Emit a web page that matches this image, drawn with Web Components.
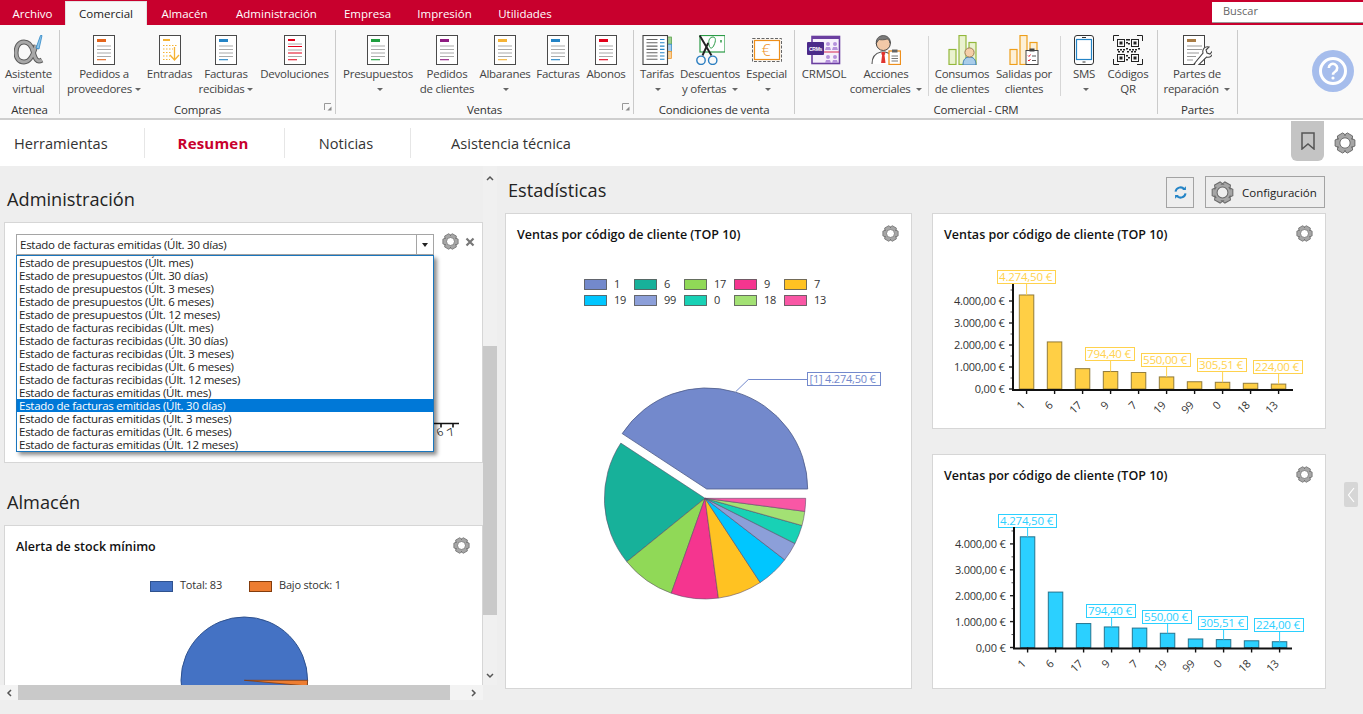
<!DOCTYPE html>
<html lang="es">
<head>
<meta charset="utf-8">
<title>Resumen</title>
<style>
  html, body { margin: 0; padding: 0; height: 100%; overflow: hidden; background: #eee; }
  body { font-family: "Open Sans", "Liberation Sans", sans-serif; font-size: 11.5px; color: #333; }
</style>
</head>
<body>

<erp-ribbon>
  <rb-group label="Atenea" style="width:60px">
    <rb-btn style="width:59px;margin-left:-1px">
      <svg slot="icon" width="30" height="30" viewBox="0 0 30 30"><path d="M28 25C23 28 21 24 19 16 17 9 14 7 10 7 4 7 2 13 2 18c0 5 3 9 8 9 6 0 10-9 12-17" fill="none" stroke="#5c5c5c" stroke-width="5"/><path d="M28 25C23 28 21 24 19 16 17 9 14 7 10 7 4 7 2 13 2 18c0 5 3 9 8 9 6 0 10-9 12-17" fill="none" stroke="#a8a8a8" stroke-width="3"/><path d="M22 13 26.500 .5 28 .5 25 14Z" fill="#8fc6ea" stroke="#2c86c7" stroke-width=".8"/></svg>
      Asistente<br>virtual
    </rb-btn>
  </rb-group>
  <rb-group label="Compras" launcher style="width:276px;padding-left:4px">
    <rb-btn style="width:80px" caret><doc-icon slot="icon" color="#e3651c"></doc-icon>Pedidos a<br>proveedores</rb-btn>
    <rb-btn style="width:51px"><doc-icon slot="icon" color="#f5b335" variant="in"></doc-icon>Entradas</rb-btn>
    <rb-btn style="width:62px" caret><doc-icon slot="icon" color="#2484c6"></doc-icon>Facturas<br>recibidas</rb-btn>
    <rb-btn style="width:75px"><doc-icon slot="icon" color="#e2001a" variant="ret"></doc-icon>Devoluciones</rb-btn>
  </rb-group>
  <rb-group label="Ventas" launcher style="width:298px;padding-left:5px">
    <rb-btn style="width:74px" caret><doc-icon slot="icon" color="#1f9e3f"></doc-icon>Presupuestos<br></rb-btn>
    <rb-btn style="width:64px"><doc-icon slot="icon" color="#8e1a80"></doc-icon>Pedidos<br>de clientes</rb-btn>
    <rb-btn style="width:52px" caret><doc-icon slot="icon" color="#f5b335"></doc-icon>Albaranes<br></rb-btn>
    <rb-btn style="width:54px"><doc-icon slot="icon" color="#2484c6"></doc-icon>Facturas</rb-btn>
    <rb-btn style="width:42px"><doc-icon slot="icon" color="#e2001a"></doc-icon>Abonos</rb-btn>
  </rb-group>
  <rb-group label="Condiciones de venta" style="width:161px;padding-left:3px">
    <rb-btn style="width:40px" caret>
      <svg slot="icon" width="30" height="30" viewBox="0 0 30 30"><rect x="25" y="2" width="4.500" height="7.200" fill="#9ed08f" stroke="#4d9a3f" stroke-width=".7"/><rect x="25" y="9.200" width="4.500" height="7.200" fill="#a9cdea" stroke="#2484c6" stroke-width=".7"/><rect x="25" y="16.400" width="4.500" height="7.200" fill="#f8cf95" stroke="#ee8f1c" stroke-width=".7"/><rect x="1" y=".5" width="24.500" height="29" fill="#fff" stroke="#444" stroke-width="1.100"/><path d="M4.500 4.500h11M4.500 7.800h11M4.500 11.100h11M4.500 14.400h11M4.500 17.700h11M4.500 21h11M4.500 24.300h11" stroke="#666" stroke-width="1.100"/><path d="M18 4.500h4.500M18 7.800h4.500M18 11.100h4.500M18 14.400h4.500M18 17.700h4.500M18 21h4.500M18 24.300h4.500" stroke="#2484c6" stroke-width="1.100"/></svg>
      Tarifas<br>
    </rb-btn>
    <rb-btn style="width:66px" caret>
      <svg slot="icon" width="30" height="30" viewBox="0 0 30 30"><rect x="5" y=".5" width="25" height="16.500" fill="#fff" stroke="#2c9b47" stroke-width="1.200"/><path d="M14 10c-1-5 1-8 4-8s3 4 1 8c-1 3-4 5-5 0z" fill="none" stroke="#2c9b47"/><path d="M26 5v2.500" stroke="#2c9b47" stroke-width="1.500"/><path d="M4.700 .5 16.500 20.500M13.200 8 7.500 20.500" stroke="#222" stroke-width="1.900"/><circle cx="6" cy="25.300" r="4.200" fill="none" stroke="#2d7fc1" stroke-width="1.400"/><circle cx="17.700" cy="25.300" r="4.200" fill="none" stroke="#2d7fc1" stroke-width="1.400"/></svg>
      Descuentos<br>y ofertas
    </rb-btn>
    <rb-btn style="width:47px" caret>
      <svg slot="icon" width="30" height="30" viewBox="0 0 30 30"><rect x=".5" y="3.500" width="29" height="23" fill="none" stroke="#666" stroke-dasharray="3 1.500"/><rect x="2.500" y="5.500" width="25" height="19" fill="#fff" stroke="#ee8f1c" stroke-width="1.200"/><text x="14" y="21" font-size="16" font-weight="300" font-family="Open Sans" fill="#ee8f1c" text-anchor="middle">€</text></svg>
      Especial<br>
    </rb-btn>
  </rb-group>
  <rb-group label="Comercial - CRM" style="width:363px;padding-left:4px">
    <rb-btn style="width:50px">
      <svg slot="icon" width="34" height="30" viewBox="0 0 34 30"><rect x="5" y="1.500" width="27.500" height="27" fill="#f6f0fb" stroke="#6b3fa0" stroke-width="1.600"/><rect x="5" y="1" width="28" height="3" fill="#6b3fa0"/><g fill="#b592dc"><circle cx="21" cy="9" r="2"/><circle cx="28" cy="9" r="2"/><circle cx="21" cy="22" r="2"/><circle cx="28" cy="22" r="2"/><path d="M18 15h6l-1-3h-4zM25 15h6l-1-3h-4zM18 28h6l-1-3h-4zM25 28h6l-1-3h-4z"/></g><path d="M16 17h16" stroke="#d8274f"/><rect x="0" y="7" width="17" height="13" rx="1" fill="#4b2a8a"/><text x="8.500" y="15.500" font-size="5" font-weight="700" font-family="Liberation Sans" fill="#fff" text-anchor="middle">CRMs</text></svg>
      CRMSOL
    </rb-btn>
    <rb-btn style="width:74px" caret>
      <svg slot="icon" width="30" height="30" viewBox="0 0 30 30"><path d="M1 29c0-8 4-11 9-12h4c4 1 7 3 8 7v5" fill="#fff" stroke="#555" stroke-width="1.100"/><path d="M10.800 17h3l.5 2-.8 1 1 8h-4.400l1-8-.8-1z" fill="#e0342f"/><circle cx="12.300" cy="8.500" r="7" fill="#f2c9a8" stroke="#444"/><path d="M5.300 8.500C4.800 3 8.800 .5 12.300 .5S19.800 3 19.300 8.500c-1-3-2-4-3-4.500-3 1-7 1-8 .5-1 1-2 2-3 4z" fill="#7a7a7a" stroke="#444" stroke-width=".7"/><rect x="18" y="16" width="11.500" height="13.500" fill="#fff" stroke="#ee8f1c" stroke-width="1.300"/><rect x="21" y="14.500" width="5.500" height="3" fill="#666"/><path d="M20.500 21h6.500M20.500 23.500h6.500M20.500 26h6.500" stroke="#555" stroke-width=".8"/></svg>
      Acciones<br>comerciales
    </rb-btn>
    <rb-sep style="margin-left:5px"></rb-sep>
    <rb-btn style="width:66px;margin-left:-3px">
      <svg slot="icon" width="30" height="30" viewBox="0 0 30 30"><g fill="#eaf2cf" stroke="#93b83c" stroke-width="1.200"><rect x="2" y="14.500" width="7" height="15"/><rect x="12" y=".5" width="7" height="29"/><rect x="22" y="7.500" width="7" height="22"/></g><path d="M16 30c0-6 3-8 6.500-8s6.500 2 6.500 8z" fill="#a9cdea" stroke="#3f7fb5"/><circle cx="22.500" cy="17.500" r="4.600" fill="#f5cfa8" stroke="#9c7a55"/></svg>
      Consumos<br>de clientes
    </rb-btn>
    <rb-btn style="width:58px">
      <svg slot="icon" width="30" height="30" viewBox="0 0 30 30"><g fill="#fdf0d6" stroke="#ee9f1c" stroke-width="1.200"><rect x="1" y="14.500" width="7" height="15"/><rect x="11" y=".5" width="7" height="29"/><rect x="21" y="7.500" width="7" height="22"/></g><rect x="17" y="15.500" width="12" height="14" fill="#fff" stroke="#444"/><rect x="20.500" y="13.500" width="5" height="3" fill="#444"/><path d="M19 20.500l1 1 1.500-2M19 25l1 1 1.500-2" fill="none" stroke="#e2001a" stroke-width=".9"/><path d="M23 21h4M23 25.500h4" stroke="#444" stroke-width=".9"/></svg>
      Salidas por<br>clientes
    </rb-btn>
    <rb-sep style="margin-left:7px"></rb-sep>
    <rb-btn style="width:34px;margin-left:3px" caret>
      <svg slot="icon" width="20" height="30" viewBox="0 0 20 30"><rect x=".5" y=".5" width="19" height="29" rx="2.500" fill="#fff" stroke="#333"/><rect x="2.500" y="4.500" width="15" height="20" fill="#fff" stroke="#2484c6" stroke-width="1.200"/><path d="M8 2.500h4M8.500 27h3" stroke="#333"/></svg>
      SMS<br>
    </rb-btn>
    <rb-btn style="width:54px">
      <qr-icon slot="icon"></qr-icon>
      Códigos<br>QR
    </rb-btn>
  </rb-group>
  <rb-group label="Partes" style="width:80px;padding-left:4px">
    <rb-btn style="width:70px" caret>
      <svg slot="icon" width="30" height="30" viewBox="0 0 30 30"><rect x="1.500" y=".5" width="21" height="29" fill="#fff" stroke="#444"/><rect x="5" y="4" width="9" height="3" fill="#a87c46"/><path d="M5 11h15M5 14.500h15M5 18h12M5 21.500h9M5 25h6" stroke="#999" stroke-width="1.100"/><path d="M12 29l9-11c-1-4 2-7 6-6l-3 3 1 3 3 1 2.500-3c1 4-2 7-6 6l-9 9c-2 1-4-1-3-2z" fill="#fff" stroke="#444" stroke-width="1.100"/></svg>
      Partes de<br>reparación
    </rb-btn>
  </rb-group>
</erp-ribbon>

<nav-strip>
  <nav-item style="width:145px;justify-content:flex-start;padding-left:14px;box-sizing:border-box">Herramientas</nav-item>
  <nav-item style="width:140px;padding-right:3px;box-sizing:border-box" active>Resumen</nav-item>
  <nav-item style="width:126px;padding-right:3px;box-sizing:border-box">Noticias</nav-item>
  <nav-item style="width:200px;border:0">Asistencia técnica</nav-item>
</nav-strip>

<dash-main>
  <side-panel slot="left">
    <section-title style="height:35px">Administración</section-title>
    <widget-card style="height:241px">
      <combo-list></combo-list>
    </widget-card>
    <section-title style="margin-top:27px;height:35px">Almacén</section-title>
    <widget-card style="height:240px" heading="Alerta de stock mínimo" gear>
      <stock-pie></stock-pie>
    </widget-card>
  </side-panel>

  <section-title slot="title" style="margin:0 0 0 3px;height:auto;flex:1;padding-bottom:4px">Estadísticas</section-title>
  <tool-button slot="tools" style="width:28px">
    <svg width="15" height="15" viewBox="0 0 18 18" fill="none" stroke="#2484c6" stroke-width="2.400"><path d="M3 8a6 6 0 0 1 10.500-3"/><path d="M15 10a6 6 0 0 1-10.500 3"/><path d="M15.500 1.500v4.500H11zM2.500 16.500V12H7z" fill="#2484c6" stroke="none"/></svg>
  </tool-button>
  <tool-button slot="tools" style="width:120px;margin-left:11px;justify-content:flex-start;padding-left:5px;height:32px"><cog-icon size="23"></cog-icon><span style="margin-left:8px">Configuración</span></tool-button>

  <widget-card slot="cards" style="grid-row:span 2" heading="Ventas por código de cliente (TOP 10)" gear>
    <sales-pie></sales-pie>
  </widget-card>
  <widget-card slot="cards" heading="Ventas por código de cliente (TOP 10)" gear>
    <bar-chart view="932 255 394 174" ox="1013" oy="389" unit="22" top="284" xend="1293" bx="1019.300" color="#ffcf45" edge="#7f6a2c" ink="#ffd24d" boxes="0:270.500,3:347.500,5:353.500,7:358.500,9:360.500" box0="997.500"></bar-chart>
  </widget-card>
  <widget-card slot="cards" heading="Ventas por código de cliente (TOP 10)" gear>
    <bar-chart view="932 496 394 193" ox="1014" oy="647.500" unit="25.900" top="527" xend="1292" bx="1020.300" color="#2bd0ff" edge="#15627c" ink="#2bd0ff" boxes="0:514.500,3:604.500,5:610.500,7:616.500,9:618.500" box0="998.500"></bar-chart>
  </widget-card>
</dash-main>

<script>
const UI_FONT = '"Open Sans", "Liberation Sans", sans-serif';

// base class: every element just stamps its static markup into an open root
class Shadowed extends HTMLElement {
  constructor() {
    super();
    this.attachShadow({mode: 'open'});
    this.shadowRoot.innerHTML = this.markup();
  }
  markup() { return '<slot></slot>'; }
}

function gearPath() {
  // six lobed cog around a round hole
  const pts = [];
  for (let i = 0; i < 6; i++) {
    const a = i * Math.PI / 3;
    [[7.2, -.6], [9.4, -.3], [9.4, .3], [7.2, .6]].forEach(([r, d]) => {
      pts.push((r * Math.cos(a + d)).toFixed(2) + ' ' + (r * Math.sin(a + d)).toFixed(2));
    });
  }
  return 'M' + pts.join('L') + 'ZM4.700 0A4.700 4.700 0 1 0-4.700 0A4.700 4.700 0 1 0 4.700 0Z';
}

class CogIcon extends Shadowed {
  markup() {
    const s = this.getAttribute('size') || 16;
    return `<style>:host{display:inline-flex} svg{display:block}</style>
      <svg width="${s}" height="${s}" viewBox="-10 -10 20 20"><path d="${gearPath()}" fill="#a6a6a6" fill-rule="evenodd" stroke="#6a6a6a" stroke-width=".9"/></svg>`;
  }
}

class DocIcon extends Shadowed {
  markup() {
    const c = this.getAttribute('color');
    const v = this.getAttribute('variant');
    let body = `<rect x="4" y="4" width="9" height="3" fill="${c}"/>
      <path d="M4 11h14M4 14.500h14M4 18h14M4 21.500h14" stroke="#aaa" stroke-width="1.100"/>
      <path d="M4 24.700h9" stroke="${c}" stroke-width="1.100"/>`;
    if (v == 'in') {
      body = `<rect x="4" y="4" width="7" height="2" fill="${c}"/>
        <path d="M4 10.500h14M4 14h10M4 17.500h8M4 21h7M4 24.500h7" stroke="${c}" stroke-width="1" stroke-dasharray="1.500 1.500"/>
        <path d="M15.500 12v12M11 20l4.500 5 4.500-5" fill="none" stroke="${c}" stroke-width="1.300"/>`;
    } else if (v == 'ret') {
      body = `<rect x="4" y="4" width="7" height="2" fill="${c}"/>
        <path d="M4 11.500h14M4 18h14M4 24.700h9" stroke="${c}" stroke-width="1.100"/>
        <path d="M4 9h14M4 15h14M4 21.500h14" stroke="#aaa" stroke-width="1.100"/>`;
    }
    return `<style>:host{display:block} svg{display:block}</style>
      <svg width="22" height="30" viewBox="0 0 22 30"><rect x=".5" y=".5" width="21" height="29" fill="#fff" stroke="#4a4a4a"/>${body}</svg>`;
  }
}

class QrIcon extends Shadowed {
  markup() {
    // corner brackets, four finder squares and some fixed noise
    const finder = (x, y) => `<rect x="${x + .5}" y="${y + .5}" width="7" height="7" fill="none" stroke="#222"/><rect x="${x + 2.500}" y="${y + 2.500}" width="3" height="3" fill="#222"/>`;
    const bits = [[13,4],[15,4],[13,7],[15,8],[4,14],[7,14],[10,14],[13,13],[16,14],[19,14],[22,14],[25,13],[5,16],[9,16],[14,16],[18,16],[21,16],[13,20],[15,22],[13,24]];
    return `<style>:host{display:block} svg{display:block}</style>
      <svg width="30" height="30" viewBox="0 0 30 30">
        <path d="M.5 6V.5H6M24 .5h5.500V6M.5 24v5.500H6M24 29.500h5.500V24" fill="none" stroke="#222"/>
        ${finder(4, 4)}${finder(18, 4)}${finder(4, 19)}${finder(18, 19)}
        ${bits.map(b => `<rect x="${b[0]}" y="${b[1]}" width="2" height="1.500" fill="#222"/>`).join('')}
      </svg>`;
  }
}

class ErpRibbon extends Shadowed {
  markup() {
    const tabs = [['Archivo', 65], ['Comercial', 82, 1], ['Almacén', 75], ['Administración', 109], ['Empresa', 73], ['Impresión', 81], ['Utilidades', 80]];
    return `<style>
      :host { display: block; height: 121px; box-sizing: border-box; background: #f9f9f9; border-bottom: 1px solid #fff; position: relative; font-family: ${UI_FONT}; }
      .tabs { display: flex; height: 25px; background: #c8002d; color: #fff; font-size: 11.500px; }
      .tab { display: flex; align-items: center; justify-content: center; height: 25px; box-sizing: border-box; padding-top: 1px; }
      .tab.on { background: #f9f9f9; color: #222; border: 1px solid #e3e3e3; border-bottom: 0; margin-top: 1px; height: 24px; padding-top: 0; font-size: 11.600px; }
      .search { margin-left: auto; width: 151px; height: 21px; margin-top: 2px; box-sizing: border-box; background: #fff; border-bottom: 1px solid #999; color: #666; padding: 0 11px; line-height: 18px; font-size: 11px; }
      .groups { display: flex; height: 95px; box-sizing: border-box; border-bottom: 2px solid #cfcfcf; }
      .help { position: absolute; left: 1312px; top: 50px; }
    </style>
    <div class="tabs">
      ${tabs.map(t => `<div class="tab ${t[2] ? 'on' : ''}" style="width:${t[1]}px">${t[0]}</div>`).join('')}
      <div class="search">Buscar</div>
    </div>
    <div class="groups"><slot></slot></div>
    <svg class="help" width="42" height="42" viewBox="0 0 42 42"><circle cx="21" cy="21" r="21" fill="#a6bdec"/><circle cx="21" cy="21" r="12.500" fill="none" stroke="#fff" stroke-width="3"/><path d="M16.800 18a4.200 4.200 0 1 1 6.500 3.500c-1.500 1-2.300 1.700-2.300 3.300" fill="none" stroke="#fff" stroke-width="2.600"/><circle cx="21" cy="28" r="1.600" fill="#fff"/></svg>`;
  }
}

class RbGroup extends Shadowed {
  markup() {
    const launcher = this.hasAttribute('launcher')
      ? '<svg class="launch" width="8" height="8" viewBox="0 0 8 8"><path d="M.5 7V.5H7" fill="none" stroke="#999"/><path d="M7.500 7.500H3.500L7.500 3.500Z" fill="#8a8a8a"/></svg>' : '';
    return `<style>
      :host { display: block; box-sizing: border-box; flex: none; height: 84px; margin-top: 5px; border-right: 1px solid #cbcbcb; position: relative; }
      .row { display: flex; height: 73px; }
      .label { position: absolute; left: 0; right: 0; top: 73px; line-height: 14px; text-align: center; font-size: 11.500px; letter-spacing: -.2px; color: #333; white-space: nowrap; }
      .launch { position: absolute; right: 3px; top: 73px; }
    </style>
    <div class="row"><slot></slot></div>
    <div class="label">${this.getAttribute('label')}</div>${launcher}`;
  }
}

class RbBtn extends Shadowed {
  markup() {
    const caret = this.hasAttribute('caret') ? '<i class="caret"></i>' : '';
    return `<style>
      :host { display: flex; flex: none; flex-direction: column; align-items: center; height: 73px; color: #444; font-size: 11.500px; letter-spacing: -.28px; }
      .icon { height: 31px; margin-top: 5px; display: flex; align-items: flex-start; }
      .text { line-height: 15px; text-align: center; white-space: nowrap; margin-top: -.5px; }
      .caret { display: inline-block; width: 0; height: 0; margin-left: 3px; border: 3px solid transparent; border-top: 3px solid #666; border-bottom: 0; vertical-align: 2px; }
    </style>
    <div class="icon"><slot name="icon"></slot></div>
    <div class="text"><slot></slot>${caret}</div>`;
  }
}

class RbSep extends Shadowed {
  markup() {
    return `<style>:host { display: block; flex: none; width: 1px; height: 60px; margin: 6px 3px 0 3px; background: #d6d6d6; }</style>`;
  }
}

class NavStrip extends Shadowed {
  markup() {
    return `<style>
      :host { display: flex; height: 45px; background: #fff; position: relative; font-family: ${UI_FONT}; }
      .book { position: absolute; left: 1291px; top: 0; width: 33px; height: 40px; background: #c4c4c4; border-radius: 0 0 6px 6px; display: flex; align-items: center; justify-content: center; }
      .cog { position: absolute; left: 1334px; top: 11px; }
    </style>
    <slot></slot>
    <div class="book"><svg width="14" height="18" viewBox="0 0 14 18"><path d="M1 1h12v16l-6-5-6 5z" fill="none" stroke="#555" stroke-width="1.500"/></svg></div>
    <cog-icon class="cog" size="22"></cog-icon>`;
  }
}

class NavItem extends Shadowed {
  markup() {
    return `<style>
      :host { display: flex; align-items: center; justify-content: center; height: 30px; margin-top: 7px; border-right: 1px solid #e6e6e6; font-size: 14.600px; color: #333; flex: none; }
      :host([active]) { color: #c8002d; font-weight: 700; font-size: 15px; letter-spacing: .2px; }
    </style><slot></slot>`;
  }
}

class DashMain extends Shadowed {
  markup() {
    return `<style>
      :host { display: flex; height: 548px; background: #eee; position: relative; font-family: ${UI_FONT}; }
      .left { display: grid; grid-template-columns: 483px 14px; grid-template-rows: 519px 15px; flex: none; }
      .view { overflow: hidden; }
      .vbar { background: #f0f0f0; display: flex; flex-direction: column; align-items: center; position: relative; }
      .hbar { background: #f3f3f3; display: flex; align-items: center; }
      .thumb-v { position: absolute; left: 0; right: 0; top: 180px; height: 269px; background: #c9c9c9; }
      .thumb-h { position: absolute; left: 18px; width: 432px; height: 15px; background: #c9c9c9; }
      .arrow { position: absolute; }
      .right { flex: 1; padding: 10px 0 0 8px; min-width: 0; }
      .head { display: flex; align-items: center; height: 32px; width: 820px; margin-bottom: 5px; }
      .grid { display: grid; grid-template-columns: 407px 394px; grid-template-rows: 216px 235px; column-gap: 20px; row-gap: 25px; }
      .collapse { position: absolute; left: 1344px; top: 316px; width: 14px; height: 25px; background: #d6d6d6; border-radius: 2px; display: flex; align-items: center; justify-content: center; }
    </style>
    <div class="left">
      <div class="view"><slot name="left"></slot></div>
      <div class="vbar">
        <div class="thumb-v"></div>
        <svg class="arrow" style="top:9px" width="8" height="6" viewBox="0 0 8 6"><path d="M1 5l3-3 3 3" fill="none" stroke="#555" stroke-width="1.500"/></svg>
        <svg class="arrow" style="top:507px" width="8" height="6" viewBox="0 0 8 6"><path d="M1 1l3 3 3-3" fill="none" stroke="#555" stroke-width="1.500"/></svg>
      </div>
      <div class="hbar" style="position:relative">
        <div class="thumb-h"></div>
        <svg class="arrow" style="left:6px" width="6" height="8" viewBox="0 0 6 8"><path d="M5 1 2 4l3 3" fill="none" stroke="#555" stroke-width="1.500"/></svg>
        <svg class="arrow" style="left:471px" width="6" height="8" viewBox="0 0 6 8"><path d="M1 1l3 3-3 3" fill="none" stroke="#555" stroke-width="1.500"/></svg>
      </div>
      <div></div>
    </div>
    <div class="right">
      <div class="head"><slot name="title"></slot><slot name="tools"></slot></div>
      <div class="grid"><slot name="cards"></slot></div>
    </div>
    <div class="collapse"><svg width="8" height="16" viewBox="0 0 8 16"><path d="M7 1 1.500 8 7 15" fill="none" stroke="#fff" stroke-width="1.200"/></svg></div>`;
  }
}

class SidePanel extends Shadowed {
  markup() {
    return `<style>:host { display: block; padding: 21px 0 0 4px; box-sizing: border-box; width: 483px; }</style><slot></slot>`;
  }
}

class SectionTitle extends Shadowed {
  markup() {
    return `<style>:host { display: block; height: 34px; line-height: 25px; margin-left: 3px; font-size: 18.200px; color: #222; white-space: nowrap; }</style><slot></slot>`;
  }
}

class ToolButton extends Shadowed {
  markup() {
    return `<style>:host { display: flex; align-items: center; justify-content: center; flex: none; height: 31px; box-sizing: border-box; border: 1px solid #a3a3a3; background: #eee; font-size: 11.500px; color: #222; }</style><slot></slot>`;
  }
}

class WidgetCard extends Shadowed {
  markup() {
    const h = this.getAttribute('heading');
    const head = h ? `<div class="head"><span>${h}</span>${this.hasAttribute('gear') ? '<cog-icon size="17"></cog-icon>' : ''}</div>` : '';
    return `<style>
      :host { display: block; box-sizing: border-box; background: #fff; border: 1px solid #d6d6d6; overflow: hidden; position: relative; }
      .head { display: flex; justify-content: space-between; align-items: center; height: 41px; padding: 0 12px 0 11px; font-weight: 600; font-size: 12.500px; color: #111; }
      .head span { white-space: nowrap; }
      cog-icon { margin-top: -3px; }
    </style>${head}<slot></slot>`;
  }
}

class ComboList extends Shadowed {
  markup() {
    const kinds = ['presupuestos', 'facturas recibidas', 'facturas emitidas'];
    const spans = ['mes', '30 días', '3 meses', '6 meses', '12 meses'];
    const rows = [];
    kinds.forEach(k => spans.forEach(s => rows.push(`Estado de ${k} (Últ. ${s})`)));
    return `<style>
      :host { display: block; padding: 11px 0 0 11px; position: relative; height: 21px; font-size: 11.500px; letter-spacing: -.26px; color: #222; }
      .line { display: flex; align-items: flex-start; height: 21px; }
      .box { display: flex; width: 418px; height: 21px; box-sizing: border-box; border: 1px solid #a5a5a5; background: #fff; line-height: 19px; }
      .val { flex: 1; padding-left: 3px; }
      .btn { width: 16px; border-left: 1px solid #a5a5a5; display: flex; align-items: center; justify-content: center; }
      .btn i { width: 0; height: 0; border: 3.500px solid transparent; border-top: 4px solid #222; border-bottom: 0; }
      cog-icon { margin-left: 8px; margin-top: -1px; }
      .x { margin-left: 6px; margin-top: 3px; }
      .pop { position: absolute; left: 11px; top: 32px; width: 418px; box-sizing: border-box; border: 1px solid #1a76bd; background: #fff; box-shadow: 3px 3px 4px rgba(0,0,0,.45); z-index: 2; }
      .pop div { height: 13px; line-height: 13px; padding-left: 2px; white-space: nowrap; }
      .pop .sel { background: #0078d7; color: #fff; }
      .under { position: absolute; left: 428px; top: 196px; }
    </style>
    <div class="line">
      <div class="box"><div class="val">Estado de facturas emitidas (Últ. 30 días)</div><div class="btn"><i></i></div></div>
      <cog-icon size="17"></cog-icon>
      <svg class="x" width="10" height="10" viewBox="0 0 10 10"><path d="M1.500 1.500l7 7M8.500 1.500l-7 7" stroke="#777" stroke-width="2.200"/></svg>
    </div>
    <svg class="under" width="32" height="30" viewBox="0 0 32 30">
      <path d="M0 4.500h26M8 4.500v4M20 4.500v4" stroke="#111" stroke-width="1.600" fill="none"/>
      <text x="6" y="18" font-size="10.500" fill="#333" font-family="Open Sans" transform="rotate(-30 6 18)">6</text>
      <text x="17" y="18" font-size="10.500" fill="#333" font-family="Open Sans" transform="rotate(-30 17 18)">7</text>
    </svg>
    <div class="pop">${rows.map((r, i) => `<div class="${i == 11 ? 'sel' : ''}">${r}</div>`).join('')}</div>`;
  }
}

const TEXT_STYLE = `font-family:${UI_FONT.replace(/"/g, "'")};font-size:11px;letter-spacing:-.2px`;

class StockPie extends Shadowed {
  markup() {
    // clipped by the scroll view below it, like the original
    return `<style>:host { display: block; } svg { display: block; } text { ${TEXT_STYLE}; fill: #333; }</style>
      <svg width="476" height="160" viewBox="5 567 476 160">
        <rect x="150.500" y="581.500" width="22" height="10" fill="#4472c4" stroke="#2f528f"/>
        <text x="180" y="589">Total: 83</text>
        <rect x="249.500" y="581.500" width="22" height="10" fill="#ed7d31" stroke="#843c0c"/>
        <text x="279" y="589">Bajo stock: 1</text>
        <circle cx="244.300" cy="680.300" r="63.300" fill="#4472c4" stroke="#2f528f"/>
        <path d="M244.300 680.300H307.600L307.300 686Z" fill="#ed7d31" stroke="#843c0c" stroke-width=".8"/>
      </svg>`;
  }
}

class SalesPie extends Shadowed {
  markup() {
    const legend = [['1', '#7389cc'], ['6', '#17b19a'], ['17', '#90d957'], ['9', '#f5358f'], ['7', '#ffc222'],
      ['19', '#00c6ff'], ['99', '#8c9fd9'], ['0', '#18d1b5'], ['18', '#a3e174'], ['13', '#f957a5']];
    // rim points read off the reference, going round from the big slice
    const cx = 705, cy = 498.300, r = 100.700;
    const rim = [[-252, -165], [-232, 188], [-100, 282], [40, 298], [165, 252], [237, 183], [269, 135], [289, 81], [298, 39], [302, 0]];
    const at = p => {
      const len = Math.hypot(p[0], p[1]);
      return [(cx + p[0] / len * r).toFixed(1), (cy + p[1] / len * r).toFixed(1)];
    };
    let slices = '';
    for (let i = 0; i < 9; i++) {
      const a = at(rim[i]), b = at(rim[i + 1]);
      const col = legend[i + 1][1];
      slices += `<path d="M${cx} ${cy}L${a}A${r} ${r} 0 0 0 ${b}Z" fill="${col}" stroke="#5b4a66" stroke-opacity=".7" stroke-width=".8"/>`;
    }
    const swatches = legend.map((l, i) => {
      const x = 584 + (i % 5) * 50, y = 279.500 + Math.floor(i / 5) * 16;
      return `<rect x="${x + .5}" y="${y}" width="22" height="10" fill="${l[1]}" stroke="#444" stroke-opacity=".75"/><text x="${x + 30}" y="${y + 8.500}">${l[0]}</text>`;
    }).join('');
    return `<style>:host { display: block; } svg { display: block; } text { ${TEXT_STYLE}; fill: #333; }</style>
      <svg width="405" height="433" viewBox="506 255 405 433">
        ${swatches}
        ${slices}
        <path d="M706.700 489H807.700A101 101 0 0 0 622.200 433.600Z" fill="#7389cc" stroke="#4d5b88" stroke-width=".8"/>
        <path d="M735.700 391.700 748.300 379.500H807" fill="none" stroke="#7389cc"/>
        <rect x="807.500" y="372.500" width="73" height="13" fill="#fff" stroke="#7389cc"/>
        <text x="809.500" y="383" style="fill:#7389cc">[1] 4.274,50 €</text>
      </svg>`;
  }
}

class BarChart extends Shadowed {
  markup() {
    const a = n => this.getAttribute(n);
    const [vx, vy, vw, vh] = a('view').split(' ').map(Number);
    const ox = +a('ox'), oy = +a('oy'), unit = +a('unit'), bx = +a('bx'), top = +a('top');
    const codes = ['1', '6', '17', '9', '7', '19', '99', '0', '18', '13'];
    const vals = [4274.5, 2140, 925, 794.4, 750, 550, 330, 305.51, 260, 224];
    const money = ['4.274,50 €', '', '', '794,40 €', '', '550,00 €', '', '305,51 €', '', '224,00 €'];
    const boxes = {};
    a('boxes').split(',').forEach(p => { const [k, v] = p.split(':'); boxes[k] = +v; });
    let out = '';
    // bars, labels below the axis, value flags on top
    vals.forEach((v, i) => {
      const x = bx + i * 28, h = v / 1000 * unit, c = x + 7.300;
      out += `<rect x="${x}" y="${oy - h}" width="14.500" height="${h}" fill="${a('color')}" stroke="${a('edge')}" stroke-opacity=".85"/>`;
      out += `<path d="M${c} ${oy}v5" stroke="#111" stroke-width="1.400"/>`;
      const shift = codes[i].length > 1 ? 0 : -1;
      out += `<text class="x" x="${c + shift}" y="${oy + 17}" text-anchor="end" transform="rotate(-45 ${c + shift} ${oy + 17})">${codes[i]}</text>`;
      if (i in boxes) {
        const w = i ? 49 : 58, bxx = i ? Math.round(c - 24.5) - .5 : +a('box0');
        out += `<path d="M${c} ${boxes[i] + 13}V${oy - h}" stroke="${a('ink')}"/>`;
        out += `<rect x="${bxx}" y="${boxes[i]}" width="${w}" height="13" fill="#fff" stroke="${a('ink')}"/>`;
        out += `<text x="${bxx + 1.500}" y="${boxes[i] + 10.500}" style="fill:${a('ink')};font-size:11.500px">${money[i]}</text>`;
      }
    });
    // value axis
    for (let k = 0; k <= 4; k++) {
      const y = oy - k * unit;
      out += `<path d="M${ox - 4} ${y}h4" stroke="#222" stroke-width="1.400"/>`;
      out += `<text x="${ox - 8.500}" y="${y + 4}" text-anchor="end">${k == 0 ? '0,00 €' : k + '.000,00 €'}</text>`;
      if (k < 4) out += `<path d="M${ox - 2.500} ${y - unit / 2}h2.500" stroke="#555"/>`;
    }
    out += `<path d="M${ox - 2.500} ${oy - 4.5 * unit}h2.500" stroke="#555"/>`;
    out += `<path d="M${ox} ${top}V${oy + 1}H${a('xend')}" fill="none" stroke="#111" stroke-width="2"/>`;
    return `<style>:host { display: block; } svg { display: block; } text { ${TEXT_STYLE}; fill: #333; }</style>
      <svg width="${vw - 2}" height="${vh - 1}" viewBox="${vx + 1} ${vy} ${vw - 2} ${vh - 1}">${out}</svg>`;
  }
}

customElements.define('cog-icon', CogIcon);
customElements.define('doc-icon', DocIcon);
customElements.define('qr-icon', QrIcon);
customElements.define('erp-ribbon', ErpRibbon);
customElements.define('rb-group', RbGroup);
customElements.define('rb-btn', RbBtn);
customElements.define('rb-sep', RbSep);
customElements.define('nav-strip', NavStrip);
customElements.define('nav-item', NavItem);
customElements.define('dash-main', DashMain);
customElements.define('side-panel', SidePanel);
customElements.define('section-title', SectionTitle);
customElements.define('tool-button', ToolButton);
customElements.define('widget-card', WidgetCard);
customElements.define('combo-list', ComboList);
customElements.define('stock-pie', StockPie);
customElements.define('sales-pie', SalesPie);
customElements.define('bar-chart', BarChart);
</script>
</body>
</html>
